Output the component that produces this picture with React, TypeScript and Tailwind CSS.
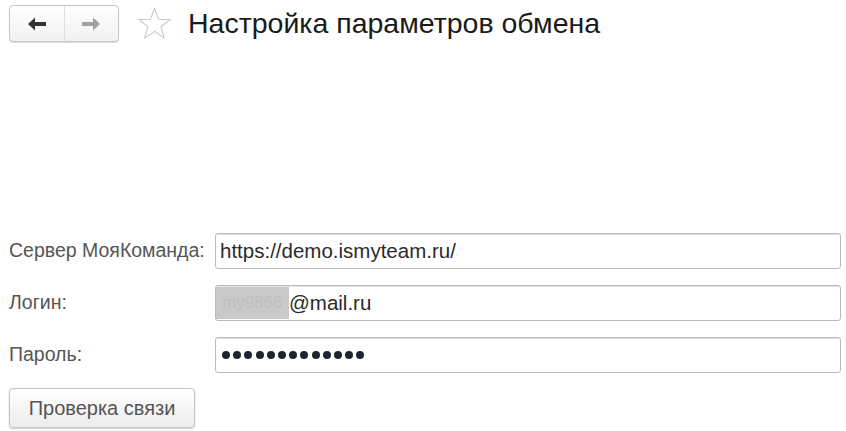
import React from "react";

const font = { fontFamily: '"Liberation Sans", Arial, sans-serif' };

function Field({ children }: { children: React.ReactNode }) {
  return (
    <div className="h-[36px] rounded-[3px] border border-[#b9b9b9] bg-white shadow-[inset_0_1px_1px_rgba(0,0,0,0.12)] flex items-center pl-[4px] text-[20.5px] text-[#2b2b2b]">
      {children}
    </div>
  );
}

export default function App() {
  return (
    <div className="w-[846px] h-[431px] bg-white overflow-hidden" style={font}>
      <div className="flex items-center pl-[9px] pt-[5px] h-[42px]">
        <div className="flex h-[37px] w-[110px] rounded-[4px] border border-[#c6c6c6] bg-gradient-to-b from-white to-[#f1f1f1] shadow-[0_1px_1px_rgba(0,0,0,0.15)]">
          <div className="flex-1 flex items-center justify-center border-r border-[#dedede]">
            <svg width="20" height="14" viewBox="0 0 20 14">
              <path d="M1 7 L8 0.5 L8 5 L19 5 L19 9 L8 9 L8 13.5 Z" fill="#333333" />
            </svg>
          </div>
          <div className="flex-1 flex items-center justify-center">
            <svg width="20" height="14" viewBox="0 0 20 14">
              <path d="M19 7 L12 0.5 L12 5 L1 5 L1 9 L12 9 L12 13.5 Z" fill="#a0a0a0" />
            </svg>
          </div>
        </div>
        <svg className="ml-[18px]" width="35" height="33" viewBox="0 0 35 33">
          <path
            d="M17.5 1.5 L21.5 12.3 L33 12.6 L24 19.7 L27.2 31 L17.5 24.4 L7.8 31 L11 19.7 L2 12.6 L13.5 12.3 Z"
            fill="none"
            stroke="#cacaca"
            strokeWidth="1.1"
            strokeLinejoin="miter"
          />
        </svg>
        <div className="ml-[16px] text-[28.5px] leading-none text-[#1a1a1a]">
          Настройка параметров обмена
        </div>
      </div>

      <div className="mt-[191px] pl-[9px] pr-[5px] grid grid-cols-[206px_1fr] gap-y-[16px] items-center text-[19.5px] text-[#555555]">
        <div>Сервер МояКоманда:</div>
        <Field>https://demo.ismyteam.ru/</Field>
        <div>Логин:</div>
        <Field>
          <span className="bg-[#c9c9c9] text-[#bfbfbf] text-[17px] h-[32px] flex items-center -ml-[4px] pl-[6px] w-[73px]">
            my9866
          </span>
          <span>@mail.ru</span>
        </Field>
        <div>Пароль:</div>
        <Field>
          <div className="flex gap-[3.2px] pl-[2px]">
            {Array.from({ length: 13 }).map((_, i) => (
              <span key={i} className="block w-[8px] h-[8px] rounded-full bg-[#1f2430]" />
            ))}
          </div>
        </Field>
      </div>

      <div className="pl-[9px] mt-[15px]">
        <button className="h-[40px] w-[186px] rounded-[4px] border border-[#c4c4c4] bg-gradient-to-b from-white to-[#ececec] shadow-[0_1px_2px_rgba(0,0,0,0.2)] text-[20px] text-[#555555]">
          Проверка связи
        </button>
      </div>
    </div>
  );
}
